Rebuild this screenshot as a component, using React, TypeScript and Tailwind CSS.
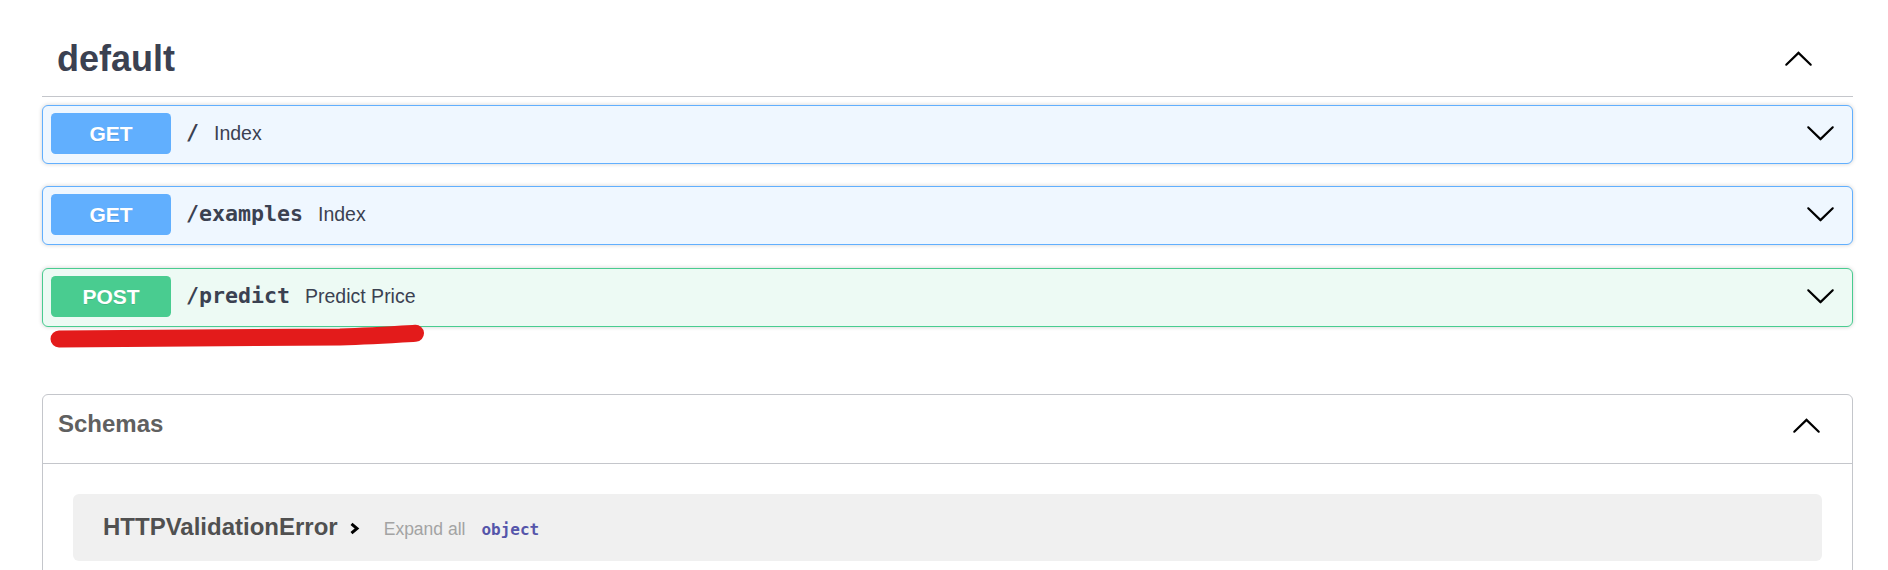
import clsx from "clsx"

const ARROW_PATH =
  "M17.418 6.109c.272-.268.709-.268.979 0s.271.701 0 .969l-7.908 7.83c-.27.268-.707.268-.979 0l-7.908-7.83c-.27-.268-.27-.701 0-.969.271-.268.709-.268.979 0L10 13.25l7.418-7.141z"

function Arrow({ up, className }: { up?: boolean; className?: string }) {
  return (
    <svg viewBox="0 0 20 20" width={31} height={31} className={clsx("flex-none", up && "rotate-180", className)}>
      <path d={ARROW_PATH} fill="#000" />
    </svg>
  )
}

type Method = "GET" | "POST"

const ENDPOINTS: { method: Method; path: string; summary: string }[] = [
  { method: "GET", path: "/", summary: "Index" },
  { method: "GET", path: "/examples", summary: "Index" },
  { method: "POST", path: "/predict", summary: "Predict Price" },
]

const METHOD_STYLES: Record<Method, { box: string; badge: string }> = {
  GET: { box: "border-[#61affe] bg-[#eff7ff]", badge: "bg-[#61affe]" },
  POST: { box: "border-[#49cc90] bg-[#edfaf4]", badge: "bg-[#49cc90]" },
}

function Operation({ method, path, summary, className }: { method: Method; path: string; summary: string; className?: string }) {
  const s = METHOD_STYLES[method]
  return (
    <div
      className={clsx(
        "flex items-center rounded-[6px] border pl-[8px] pt-[7px] pb-[9px] shadow-[0_0_4px_rgba(0,0,0,0.19)]",
        s.box,
        className
      )}
    >
      <span
        className={clsx(
          "flex h-[41px] min-w-[120px] items-center justify-center rounded-[4.5px] text-[21px] font-bold text-white [text-shadow:0_1px_0_rgba(0,0,0,0.1)]",
          s.badge
        )}
      >
        {method}
      </span>
      <span className="pl-[15px] pr-[15px] font-[family-name:'DejaVu_Sans_Mono',monospace] text-[21.6px] font-bold text-[#3b4151]">
        {path}
      </span>
      <span className="text-[19.5px] text-[#3b4151]">{summary}</span>
      <Arrow className="ml-auto mr-[16px] mb-[2px]" />
    </div>
  )
}

function ChevronRight() {
  return (
    <svg viewBox="0 0 11 13" width={11} height={13} className="mb-[1px] ml-[11px] flex-none">
      <polyline points="2.5,1.8 8,6.5 2.5,11.2" fill="none" stroke="#000" strokeWidth={3} />
    </svg>
  )
}

export default function App() {
  return (
    <div className="relative h-[570px] overflow-hidden bg-white font-[family-name:'Liberation_Sans',Arial,sans-serif] text-[#3b4151]">
      <div className="pl-[42px] pr-[35px] pt-[22px]">
        {/* tag header */}
        <h3 className="flex items-center border-b border-[#c4c6cb] pl-[15px] pr-[39px] pt-[16px] pb-[16px] text-[36px] font-bold leading-[42px]">
          <span>default</span>
          <Arrow up className="ml-auto" />
        </h3>

        <div className="mt-[8px] flex flex-col">
          {ENDPOINTS.map((e, i) => (
            <Operation
              key={e.path}
              {...e}
              className={i === 1 ? "mt-[22px]" : i === 2 ? "mt-[23px]" : undefined}
            />
          ))}
        </div>

        {/* schemas */}
        <section className="mt-[67px] rounded-[6px] border border-[#c4c6cb] pb-[23px]">
          <div className="flex h-[69px] items-start border-b border-[#c4c6cb] pl-[15px] pr-[30px]">
            <span className="mt-[15px] text-[24px] font-bold leading-[28px] text-[#606060]">Schemas</span>
            <Arrow up className="ml-auto mt-[16px]" />
          </div>
          <div className="mx-[30px] mt-[30px] flex h-[67px] items-center rounded-[6px] bg-[#f0f0f0] pl-[30px]">
            <div className="flex items-baseline">
              <span className="text-[24px] font-bold leading-[28px] text-[#505050]">HTTPValidationError</span>
              <ChevronRight />
              <span className="ml-[24px] text-[17.5px] text-[#a3a3a3]">Expand all</span>
              <span className="ml-[16px] font-[family-name:'DejaVu_Sans_Mono',monospace] text-[16px] font-bold text-[#5555aa]">
                object
              </span>
            </div>
          </div>
        </section>
      </div>

      {/* hand-drawn red underline */}
      <svg
        viewBox="40 318 400 36"
        width={400}
        height={36}
        className="pointer-events-none absolute left-[40px] top-[318px]"
      >
        <path
          d="M 59 339 C 180 339, 300 338, 340 337 C 370 336, 395 334.5, 415.5 333.3"
          fill="none"
          stroke="#e31b1b"
          strokeWidth={17}
          strokeLinecap="round"
        />
      </svg>
    </div>
  )
}
